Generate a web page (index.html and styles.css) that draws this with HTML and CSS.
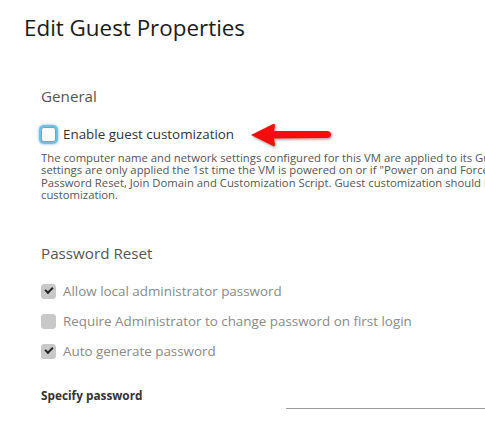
FILE: index.html
```html
<!DOCTYPE html>
<html>
<head>
<meta charset="utf-8">
<link rel="stylesheet" href="styles.css">
</head>
<body>
<div class="modal">
  <h1 class="title">Edit Guest Properties</h1>
  <div class="content">
    <section class="section">
      <h2 class="section-title">General</h2>
      <label class="check-row enable">
        <span class="box focus"></span>
        <span class="label-text dark">Enable guest customization</span>
      </label>
      <p class="desc">
        <span class="line">The computer name and network settings configured for this VM are applied to its Guest OS when the VM is powered on.</span>
        <span class="line">settings are only applied the 1st time the VM is powered on or if "Power on and Force Guest Customization" is used.</span>
        <span class="line">Password Reset, Join Domain and Customization Script. Guest customization should be disabled after the initial</span>
        <span class="line">customization.</span>
      </p>
    </section>
    <section class="section pw">
      <h2 class="section-title">Password Reset</h2>
      <div class="checks">
        <label class="check-row">
          <span class="box disabled checked"></span>
          <span class="label-text">Allow local administrator password</span>
        </label>
        <label class="check-row">
          <span class="box disabled"></span>
          <span class="label-text">Require Administrator to change password on first login</span>
        </label>
        <label class="check-row">
          <span class="box disabled checked"></span>
          <span class="label-text">Auto generate password</span>
        </label>
      </div>
      <div class="field">
        <span class="field-label">Specify password</span>
        <span class="input"></span>
      </div>
    </section>
  </div>
  <svg class="arrow" width="100" height="34" viewBox="0 0 100 34">
    <defs>
      <filter id="sh" x="-20%" y="-40%" width="140%" height="180%">
        <feDropShadow dx="1" dy="1.5" stdDeviation="1.2" flood-color="#000" flood-opacity="0.35"/>
      </filter>
    </defs>
    <g filter="url(#sh)">
      <path d="M4 16 L26 5 Q28 4 28 7 L27 12 L80 12 Q84 12 84 15.5 Q84 19 80 19 L27 19.5 L28 25 Q28 28 26 27 Z" fill="#f50b0b"/>
    </g>
  </svg>
</div>
</body>
</html>
```
FILE: styles.css
```css
html, body {
  margin: 0;
  padding: 0;
  background: #fff;
  overflow: hidden;
}
body {
  width: 485px;
  height: 428px;
  font-family: "Open Sans", "Liberation Sans", sans-serif;
}
.modal {
  position: relative;
  width: 700px;
  padding: 14px 0 0 24px;
}
.title {
  margin: 0;
  font-weight: 400;
  font-size: 22.4px;
  line-height: 28px;
  color: #1b1b1b;
}
.content {
  padding: 44px 0 0 17px;
}
.section-title {
  margin: 0;
  font-weight: 400;
  font-size: 15.2px;
  line-height: 20px;
  color: #565656;
}
.check-row {
  display: flex;
  align-items: center;
  gap: 7px;
  height: 18px;
}
.enable {
  margin-top: 19px;
}
.box {
  box-sizing: border-box;
  width: 15px;
  height: 15px;
  border-radius: 3px;
  border: 1px solid #8c8c8c;
  background: #fff;
  position: relative;
  flex: none;
}
.box.focus {
  box-shadow: 0 0 0 2px #6fc0ea, 0 0 2px 3px rgba(111,192,234,0.5);
  border-color: #999;
}
.box.disabled {
  background: #c8c8c8;
  border-color: #c8c8c8;
}
.box.checked::after {
  content: "";
  position: absolute;
  left: 3px;
  top: 2px;
  width: 6px;
  height: 3px;
  border-left: 2px solid #222;
  border-bottom: 2px solid #222;
  transform: rotate(-45deg);
}
.label-text {
  font-size: 13.4px;
  color: #8a8a8a;
  white-space: nowrap;
}
.label-text.dark {
  color: #333;
}
.desc {
  margin: 9px 0 0 0;
  width: 444px;
  overflow: hidden;
  font-size: 11.3px;
  line-height: 12.3px;
  color: #565656;
}
.line {
  display: block;
  white-space: nowrap;
}
.pw {
  margin-top: 42px;
}
.checks {
  margin-top: 19px;
  display: flex;
  flex-direction: column;
  gap: 12px;
}
.field {
  margin-top: 27px;
  display: flex;
  align-items: flex-end;
}
.field-label {
  width: 245px;
  font-size: 11.8px;
  font-weight: 700;
  color: #333;
  line-height: 16px;
}
.input {
  width: 300px;
  height: 1px;
  background: #9a9a9a;
  margin-bottom: -6px;
}
.arrow {
  position: absolute;
  left: 247px;
  top: 119px;
}
```
